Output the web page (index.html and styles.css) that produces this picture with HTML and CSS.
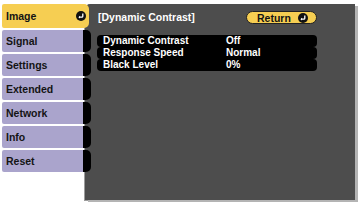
FILE: index.html
```html
<!DOCTYPE html>
<html lang="en">
<head>
    <meta charset="UTF-8">
    <title>Image - Dynamic Contrast</title>
    <link rel="stylesheet" href="styles.css">
</head>
<body>
    <div class="screen">
        <ul class="tabs">
            <li class="tab active">
                <span>Image</span>
                <svg class="enter-icon" viewBox="0 0 10 10" width="10" height="10">
                    <circle cx="5" cy="5" r="5" fill="#111"/>
                    <path d="M6.8 2.6 V5.2 A1 1 0 0 1 5.8 6.2 H3.2" fill="none" stroke="#fff" stroke-width="1.3"/>
                    <path d="M2.4 6.2 L4 4.8 L4 7.6 Z" fill="#fff"/>
                </svg>
            </li>
            <li class="tab">Signal</li>
            <li class="tab">Settings</li>
            <li class="tab">Extended</li>
            <li class="tab">Network</li>
            <li class="tab">Info</li>
            <li class="tab">Reset</li>
        </ul>

        <section class="panel">
            <div class="panel-head">
                <span class="crumb">[Dynamic Contrast]</span>
                <button class="return-btn">
                    <span>Return</span>
                    <svg class="enter-icon" viewBox="0 0 10 10" width="10" height="10">
                        <circle cx="5" cy="5" r="5" fill="#111"/>
                        <path d="M6.8 2.6 V5.2 A1 1 0 0 1 5.8 6.2 H3.2" fill="none" stroke="#fff" stroke-width="1.3"/>
                        <path d="M2.4 6.2 L4 4.8 L4 7.6 Z" fill="#fff"/>
                    </svg>
                </button>
            </div>

            <div class="rows">
                <div class="row"><span class="label">Dynamic Contrast</span><span class="value">Off</span></div>
                <div class="row"><span class="label">Response Speed</span><span class="value">Normal</span></div>
                <div class="row"><span class="label">Black Level</span><span class="value">0%</span></div>
            </div>
        </section>
    </div>
</body>
</html>
```

FILE: styles.css
```css
:root {
    --tab-color: #aaa4cc;
    --active-color: #f6ce52;
    --panel-color: #4d4d4d;
}

* {
    box-sizing: border-box;
    margin: 0;
    padding: 0;
    font-family: 'Liberation Sans', Arial, sans-serif;
}

body {
    background: #fff;
    width: 360px;
    height: 203px;
    overflow: hidden;
}

.screen {
    display: flex;
    align-items: flex-start;
    padding: 4px 0 0 2px;
}

.tabs {
    list-style: none;
    width: 89px;
    display: flex;
    flex-direction: column;
    gap: 2px;
    position: relative;
    z-index: 2;
}

.tab {
    height: 22px;
    display: flex;
    align-items: center;
    padding-left: 4px;
    background: var(--tab-color);
    border-right: 8px solid #000;
    border-radius: 2px 5px 5px 2px;
    font-size: 10.5px;
    font-weight: bold;
    color: #141414;
}

.tab.active {
    height: 24px;
    width: 87px;
    justify-content: space-between;
    padding-right: 3px;
    background: var(--active-color);
    border-right: none;
}

.enter-icon {
    display: block;
}

.panel {
    margin-left: -6px;
    width: 270px;
    height: 196px;
    background: var(--panel-color);
    border-radius: 5px 0 0 0;
    box-shadow: 3px 2px 0 #b4b4b4, -1px 1px 0 #9c9c9c;
    padding: 7px 38px 0 12px;
    color: #fff;
}

.panel-head {
    display: flex;
    justify-content: space-between;
    align-items: center;
    height: 13px;
}

.crumb {
    padding-left: 1px;
    font-size: 10.5px;
    font-weight: bold;
    line-height: 13px;
}

.return-btn {
    width: 71px;
    height: 13px;
    display: flex;
    align-items: center;
    gap: 7px;
    padding-left: 10px;
    background: var(--active-color);
    border: 1px solid #222;
    border-radius: 7px;
    font-size: 10.5px;
    font-weight: bold;
    color: #141414;
}

.rows {
    margin-top: 11px;
}

.row {
    display: grid;
    grid-template-columns: 129px 1fr;
    height: 12px;
    line-height: 12px;
    background: #000;
    border-radius: 4px;
    font-size: 10px;
    font-weight: bold;
}

.label {
    padding-left: 6px;
}
```
